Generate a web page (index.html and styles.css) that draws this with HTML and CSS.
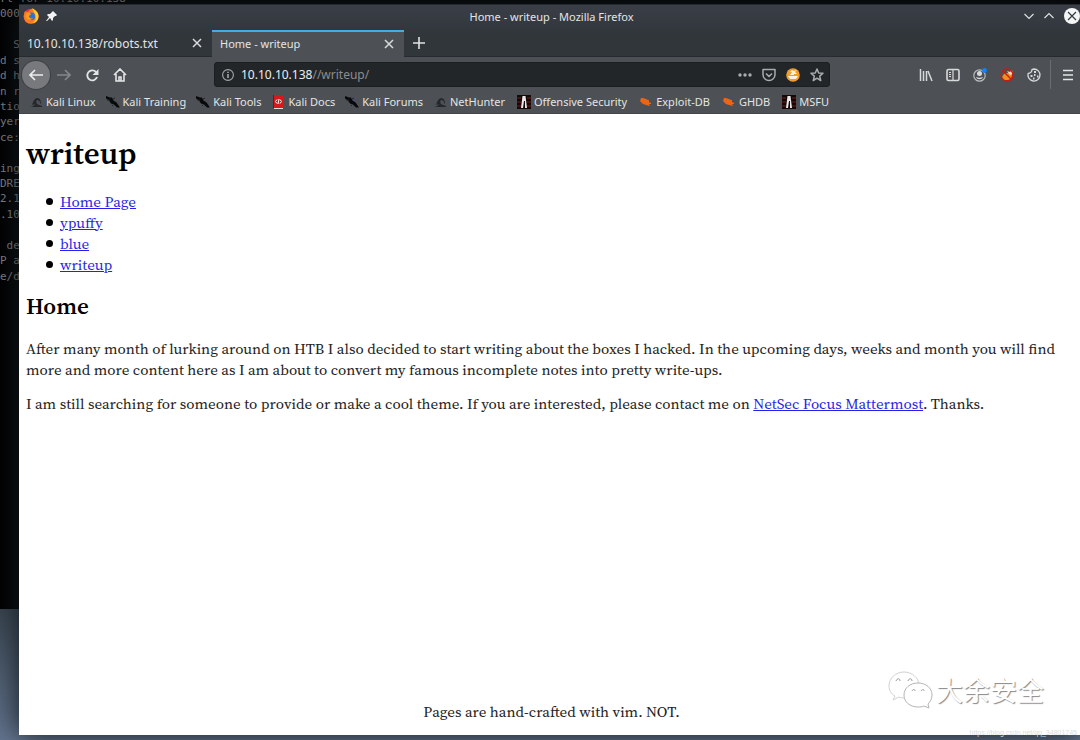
FILE: index.html
```html
<!DOCTYPE html>
<html lang="en">
<head>
<meta charset="utf-8">
<title>Home - writeup</title>
<link rel="stylesheet" href="styles.css">
</head>
<body class="desktop">
<svg class="defs" aria-hidden="true">
  <symbol id="dragon" viewBox="0 0 14 14"><path d="M1 12c2 0 4-1 5-3-1 0-2 1-3 1 1-3 2-6 5-7 3 0 4 3 4 6l-1-1c0-2-1-3-3-3-1 1-1 2 0 4 1 1 3 1 5 2v1H1z" fill="#24282b"/></symbol>
  <symbol id="blade" viewBox="0 0 14 14"><path d="M0 1l4 1.500 2 0 1.500 3 3 2 3.500 5-3 0-3-3-3-1-2-3-3-2z" fill="#08090a"/><path d="M1 5l3 0M7 4l2-1M7 10l-1 1" stroke="#202427"/></symbol>
  <symbol id="docs" viewBox="0 0 14 14"><path d="M2 0h10v13H2z" fill="#d8171e"/><path d="M2 0h1v13H2z" fill="#272d66"/><path d="M3 13h9v1H3z" fill="#ddd"/><path d="M6 4.500L4.500 6.500l1.500 2M9 4.500l1.500 2L9 8.500M8 4L7 9" stroke="#fff" fill="none"/></symbol>
  <symbol id="offsec" viewBox="0 0 14 14"><path d="M0 0h14v14H0z" fill="#170808"/><path d="M0 3h4M10 3h4M0 7h4M10 7h4M0 11h4M10 11h4" stroke="#6d2020"/><path d="M5.500 1h3l.5 4 1 8H8V6H7l-1 7H4l1-8z" fill="#e8e8e8"/></symbol>
  <symbol id="bug" viewBox="0 0 14 14"><path d="M2 3l2 0 3 1 2 1 1 0 0 2 2 1 0 1-2 0 1 2-4-1-3-1-3-3z" fill="#ed6412"/></symbol>
  <symbol id="cross" viewBox="0 0 10 10"><path d="M1 1l8 8M9 1L1 9" stroke="#d9dbdc" stroke-width="1.500"/></symbol>
</svg>

<div class="terminal" aria-hidden="true">
  <span>rt for 10.10.10.138</span><span>000</span><span></span><span>  S</span><span>d s</span><span>d h</span><span>n r</span><span>tio</span><span>yer</span><span>ce:</span><span></span><span>ing</span><span>DRE</span><span>2.1</span><span>.10</span><span></span><span> de</span><span>P a</span><span>e/d</span>
</div>

<div class="window">
  <header class="chrome">
    <div class="titlebar">
      <div class="title-side">
        <svg width="16" height="16" viewBox="0 0 16 16"><circle cx="8" cy="8.300" r="7.600" fill="#f5333f"/><path d="M2 3c1 1 2 1 3 1l3-3c2 0 6 2 7 5 1 5-2 9-6 9.500C4 16 1 13 1 9c0-2 0-4 1-6z" fill="#ff7a1c"/><path d="M9 0c3 2 7 4 6.500 9-.5 4-3 6-6 6 3-2 4-5 3-8C12 5 10 3 9 0z" fill="#ffcf2e"/><circle cx="8.200" cy="8.400" r="3.800" fill="#2872d8"/><path d="M3 6c2-2 4-1 5 0L6 8c0 2 2 3 4 2-1 2-5 3-7 0-1-1-1-3 0-4z" fill="#ff9a20"/></svg>
        <svg width="12" height="12" viewBox="0 0 12 12"><path d="M7 1l4 4-1 1-1 0-2 2 0 2-1 1-2-3-3 3H0l3-4-2-2 1-1h2l2-2V2z" fill="#f2f3f3"/></svg>
      </div>
      <span class="title">Home - writeup - Mozilla Firefox</span>
      <div class="title-side title-controls">
        <button aria-label="Minimize"><svg width="10" height="10" viewBox="0 0 10 10"><path d="M.5 3L5 7.500 9.500 3" stroke="#dcdedf" fill="none" stroke-width="1.200"/></svg></button>
        <button aria-label="Maximize"><svg width="10" height="10" viewBox="0 0 10 10"><path d="M.5 7L5 2.500 9.500 7" stroke="#dcdedf" fill="none" stroke-width="1.200"/></svg></button>
        <button aria-label="Close window"><svg width="16" height="16" viewBox="0 0 16 16"><circle cx="8" cy="8" r="8" fill="#f4f5f5"/><path d="M4 4l8 8M12 4l-8 8" stroke="#353a3e" stroke-width="1.200"/></svg></button>
      </div>
    </div>
    <div class="tabs">
      <div class="tab"><span>10.10.10.138/robots.txt</span><button aria-label="Close tab"><svg width="10" height="10"><use href="#cross"/></svg></button></div>
      <div class="tab active"><span>Home - writeup</span><button aria-label="Close tab"><svg width="10" height="10"><use href="#cross"/></svg></button></div>
      <button class="new-tab" aria-label="New tab"><svg width="12" height="12" viewBox="0 0 12 12"><path d="M6 0v12M0 6h12" stroke="#e0e2e3" stroke-width="1.600"/></svg></button>
    </div>
    <nav class="toolbar">
      <div class="nav-buttons">
        <button class="back" aria-label="Back"><svg width="14" height="12" viewBox="0 0 14 12"><path d="M6 1L1 6l5 5M1 6h13" stroke="#eceded" fill="none" stroke-width="1.700"/></svg></button>
        <button aria-label="Forward"><svg width="14" height="12" viewBox="0 0 14 12"><path d="M8 1l5 5-5 5M13 6H0" stroke="#85888b" fill="none" stroke-width="1.600"/></svg></button>
        <button aria-label="Reload"><svg width="14" height="14" viewBox="0 0 14 14"><path d="M11 4A5 5 0 1 0 12 9" stroke="#e3e4e5" fill="none" stroke-width="1.900"/><path d="M13.500 1v6H7.500z" fill="#e3e4e5"/></svg></button>
        <button aria-label="Home"><svg width="14" height="14" viewBox="0 0 14 14"><path d="M1 7l6-6 6 6M3 6v7h8V6M6 13V9h2v4" stroke="#e3e4e5" fill="none" stroke-width="1.600"/></svg></button>
      </div>
      <div class="urlbar">
        <svg width="12" height="12" viewBox="0 0 12 12"><circle cx="6" cy="6" r="5.400" fill="none" stroke="#a5a8aa" stroke-width="1.100"/><path d="M6 5v4M6 2.700v1.300" stroke="#b6b8ba" stroke-width="1.400"/></svg>
        <a class="url" href="#">10.10.10.138<span>//writeup/</span></a>
        <button aria-label="Page actions"><svg width="14" height="14" viewBox="0 0 14 14"><circle cx="2" cy="7" r="1.700" fill="#a9acad"/><circle cx="7" cy="7" r="1.700" fill="#a9acad"/><circle cx="12" cy="7" r="1.700" fill="#a9acad"/></svg></button>
        <button aria-label="Save to Pocket"><svg width="14" height="14" viewBox="0 0 14 14"><path d="M1 1.500h12v5a6 6 0 0 1-12 0z M4 5.500l3 3 3-3" stroke="#a9acad" fill="none" stroke-width="1.500" stroke-linejoin="round"/></svg></button>
        <button aria-label="Cookie container"><svg width="14" height="14" viewBox="0 0 14 14"><circle cx="7" cy="7" r="6.800" fill="#f39b2b"/><path d="M2 8h10l-2 3H4zM4 7l2-3-2 0 2-2 2 1 3-1-2 2 2 2-3 0v1z" fill="#fff3df"/></svg></button>
        <button aria-label="Bookmark page"><svg width="14" height="14" viewBox="0 0 14 14"><path d="M7 1l1.700 4 4.300.3-3.300 2.800 1 4.400L7 10.200l-3.700 2.300 1-4.400L1 5.300 5.300 5z" stroke="#a9acad" fill="none" stroke-width="1.500" stroke-linejoin="round"/></svg></button>
      </div>
      <div class="extensions">
        <button aria-label="Library"><svg width="14" height="14" viewBox="0 0 14 14"><path d="M1.500 1v12M4.500 3v10M7.500 3v10M9 3l4 10" stroke="#d7d9da" stroke-width="1.500"/></svg></button>
        <button aria-label="Sidebar"><svg width="14" height="14" viewBox="0 0 14 14"><rect x="1" y="1.500" width="12" height="11" rx="1.500" stroke="#d7d9da" stroke-width="1.600" fill="none"/><path d="M7 2v10M3 4.500h2M3 6.500h2M3 8.500h2" stroke="#d7d9da" stroke-width="1.200"/></svg></button>
        <button aria-label="Account"><svg width="14" height="14" viewBox="0 0 14 14"><circle cx="6.500" cy="7.500" r="5.700" fill="none" stroke="#b8babc" stroke-width="1.200"/><circle cx="6.500" cy="5.500" r="2.500" fill="#d7d9da"/><path d="M3 9c2 1 5 1 7 0-1 3-6 3-7 0z" fill="#d7d9da"/><circle cx="11.500" cy="2.500" r="2.400" fill="#0a84ff"/></svg></button>
        <button aria-label="Proxy"><svg width="14" height="14" viewBox="0 0 14 14"><path d="M2 9l2-3 3-1 3-1 2 3-1 4-3 1H4z" fill="#ef8e18"/><path d="M7 3l3 1 2-2 1 4-3 1z" fill="#e8d9c0"/><circle cx="7" cy="7" r="6" fill="none" stroke="#c91b16" stroke-width="1.300"/><path d="M3 3l8 8" stroke="#c91b16" stroke-width="1.400"/></svg></button>
        <button aria-label="Cookies"><svg width="14" height="14" viewBox="0 0 14 14"><path d="M5 1.500C5 3 4 5 1.200 5.500A6 6 0 1 0 13 7C13 4 10.500 1 7 1z" stroke="#d7d9da" stroke-width="1.300" fill="none"/><path d="M7 4h2M3.500 8H5.500M7 7h1.500M6 10.500h1.500M10 8.500h1.500" stroke="#d7d9da" stroke-width="1.800"/></svg></button>
      </div>
      <button class="menu" aria-label="Menu"><svg width="12" height="12" viewBox="0 0 12 12"><path d="M1 1.500h10M1 6h10M1 10.500h10" stroke="#e3e4e5" stroke-width="1.500"/></svg></button>
    </nav>
    <nav class="bookmarks">
      <a href="#"><svg><use href="#dragon"/></svg>Kali Linux</a>
      <a href="#"><svg><use href="#blade"/></svg>Kali Training</a>
      <a href="#"><svg><use href="#blade"/></svg>Kali Tools</a>
      <a href="#"><svg><use href="#docs"/></svg>Kali Docs</a>
      <a href="#"><svg><use href="#blade"/></svg>Kali Forums</a>
      <a class="wide" href="#"><svg><use href="#dragon"/></svg>NetHunter</a>
      <a class="wide" href="#"><svg><use href="#offsec"/></svg>Offensive Security</a>
      <a class="wide" href="#"><svg><use href="#bug"/></svg>Exploit-DB</a>
      <a class="wide" href="#"><svg><use href="#bug"/></svg>GHDB</a>
      <a class="wide" href="#"><svg><use href="#offsec"/></svg>MSFU</a>
    </nav>
  </header>

  <div class="page">
    <main>
      <h1>writeup</h1>
      <ul>
        <li><a href="#">Home Page</a></li>
        <li><a href="#">ypuffy</a></li>
        <li><a href="#">blue</a></li>
        <li><a href="#">writeup</a></li>
      </ul>
      <h2>Home</h2>
      <p>After many month of lurking around on HTB I also decided to start writing about the boxes I hacked. In the upcoming days, weeks and month you will find more and more content here as I am about to convert my famous incomplete notes into pretty write-ups.</p>
      <p>I am still searching for someone to provide or make a cool theme. If you are interested, please contact me on <a href="#">NetSec Focus Mattermost</a>. Thanks.</p>
    </main>
    <footer>Pages are hand-crafted with vim. NOT.</footer>
  </div>
</div>

<div class="brand">
  <svg width="46" height="40" viewBox="0 0 46 40"><g fill="#fff" stroke="#b4b4b4"><path d="M16 2C8 2 1 8 1 16c0 4 2 8 6 10l-2 4 6-3c2 1 5 1 8 1 7-1 12-6 12-13C31 8 24 2 16 2z" stroke="#d2d2d2"/><path d="M30 13c-8 0-14 5-14 12s6 12 14 12c2 0 4 0 6-1l5 2-1-4c2-2 4-5 4-9 0-7-6-12-14-12z"/></g><path d="M8 11c1-3 4-3 4 0M20 11c1-3 4-3 4 0M24 21c1-2 3-2 3 0M33 21c1-2 3-2 3 0" fill="none" stroke="#999"/></svg>
  <span>大余安全</span>
</div>
<span class="source">https://blog.csdn.net/qq_34801745</span>
</body>
</html>
```
FILE: styles.css
```css
* { box-sizing: border-box; }

.desktop {
  display: flex;
  min-height: 100vh;
  margin: 0;
  padding: 4px 0 5px 19px;
  position: relative;
  overflow-x: hidden;
  background: linear-gradient(#39444f 82%, #526174 92%, #64758f);
  font-family: "Noto Sans", sans-serif;
  font-size: 11px;
}

.defs { position: absolute; width: 0; height: 0; }

.terminal {
  position: absolute;
  top: -9px;
  left: 0;
  right: 0;
  height: 618px;
  display: grid;
  grid-template-rows: repeat(19, 1fr);
  padding-bottom: 325px;
  background: #000;
  color: #858585;
  font: 11px/15px "DejaVu Sans Mono", monospace;
  white-space: pre;
}

.window {
  position: relative;
  display: flex;
  flex-direction: column;
  flex: 1;
  min-width: 0;
  box-shadow: 0 0 28px #141a20;
}

.chrome {
  background: linear-gradient(#3a3e47, #31363b 30px, #31363b);
  border-top: 1px solid #25282c;
  color: #e3e5e6;
}

.chrome button {
  display: flex;
  align-items: center;
  justify-content: center;
  padding: 0;
  border: 0;
  background: none;
}

.titlebar { display: flex; align-items: center; height: 25px; padding: 0 0 3px 4px; }
.title-side { display: flex; flex: 1; align-items: center; gap: 7px; }
.title-controls { justify-content: flex-end; gap: 10px; }
.title { font-size: 11px; }

.tabs { display: flex; height: 27px; border-bottom: 1px solid #272b2f; }
.tab {
  display: flex;
  align-items: center;
  justify-content: space-between;
  width: 193px;
  padding: 0 10px 0 8px;
  font-size: 12px;
}
.active {
  width: 192px;
  margin-bottom: -1px;
  padding-bottom: 2px;
  background: #4d5054;
  border-top: 2px solid #3daee9;
  font-size: 11px;
}
.new-tab { width: 30px; }

.toolbar { display: flex; align-items: center; height: 35px; background: #4d5054; }
.nav-buttons { display: flex; align-items: center; width: 195px; padding-left: 3px; }
.nav-buttons button { width: 28px; height: 28px; }
.nav-buttons .back { border-radius: 50%; background: #77797c; box-shadow: 0 0 0 1px #3d4044; }

.urlbar {
  display: flex;
  align-items: center;
  flex: 1;
  gap: 10px;
  height: 25px;
  max-width: 616px;
  padding: 0 5px 0 7px;
  border: 1px solid #1c1f21;
  border-radius: 3px;
  background: #232629;
}
.url { flex: 1; margin-left: -3px; color: #eceded; font-size: 12px; text-decoration: none; }
.url span { color: #8b8e90; }

.extensions { display: flex; gap: 13px; margin-left: auto; padding-right: 9px; }
.menu { width: 30px; height: 29px; }
.chrome .menu { border-left: 1px solid #6b6e71; padding-left: 4px; }

.bookmarks {
  display: flex;
  align-items: center;
  gap: 10px;
  height: 22px;
  padding: 0 0 2px 10px;
  background: #4d5054;
  border-bottom: 1px solid #414448;
}
.bookmarks a {
  display: flex;
  align-items: center;
  gap: 3px;
  color: #e3e5e6;
  text-decoration: none;
  white-space: nowrap;
}
.bookmarks .wide { margin-right: 2px; }
.bookmarks svg { width: 14px; height: 14px; }

.page {
  display: flex;
  flex-direction: column;
  flex: 1;
  padding: 0 7px 13px;
  background: #fff;
  color: #222;
  font: 15px/21px "Source Serif Pro", "Source Serif 4", "Liberation Serif", serif;
}
.page main { flex: 1; }
.page h1 { margin: 19px 0 18px; color: #000; font-size: 31px; line-height: 40px; font-weight: 600; }
.page ul { margin: 0 0 15px; padding-left: 20px; list-style: none; }
.page li { display: flex; align-items: center; gap: 7px; }
.page li::before { content: ""; width: 7px; height: 7px; border-radius: 50%; background: #000; }
.page a { color: #2a1fe8; }
.page h2 { margin: 0 0 16px; color: #000; font-size: 23px; line-height: 32px; font-weight: 600; }
.page p { margin: 0 0 13px; }
.page footer { padding-left: 4px; text-align: center; }

.brand {
  position: absolute;
  right: 36px;
  bottom: 30px;
  display: flex;
  align-items: center;
  gap: 2px;
  color: #fff;
  font: 27px/40px "Noto Sans CJK SC", sans-serif;
  text-shadow: 1px 1px 1px #888;
}

.source {
  position: absolute;
  right: 3px;
  bottom: 0;
  color: #dcdcdc;
  font: 7px/15px "Liberation Sans", sans-serif;
}
```
